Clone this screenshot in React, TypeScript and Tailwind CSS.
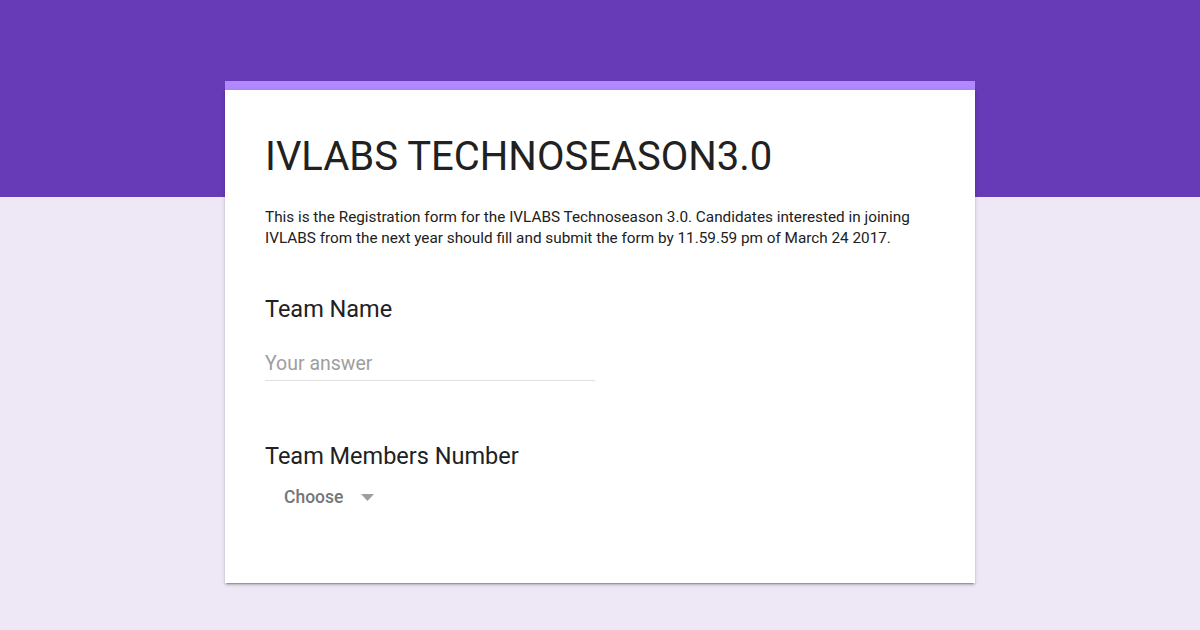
export default function App() {
  return (
    <div
      className="relative h-[630px] w-[1200px] overflow-hidden bg-[#ede7f6]"
      style={{ fontFamily: "Roboto, 'Liberation Sans', sans-serif" }}
    >
      <div className="h-[197px] bg-[#673ab7]" />
      <div className="absolute left-[225px] top-[81px] w-[750px]">
        <div className="h-[9px] bg-[#b388ff]" />
        <div className="h-[493px] bg-white px-10 pt-[44px] shadow-[0_2px_2px_rgba(0,0,0,0.14),0_1px_5px_rgba(0,0,0,0.12),0_3px_1px_-2px_rgba(0,0,0,0.2)]">
          <h1 className="text-[40px] leading-[46px] font-normal text-[#212121]">IVLABS TECHNOSEASON3.0</h1>
          <p className="mt-[27px] text-[15.3px] leading-[21px] text-[#212121]">
            This is the Registration form for the IVLABS Technoseason 3.0. Candidates interested in joining
            <br />
            IVLABS from the next year should fill and submit the form by 11.59.59 pm of March 24 2017.
          </p>
          <div className="mt-[46px] text-[23.5px] leading-[28px] text-[#212121]">Team Name</div>
          <div className="mt-[28px] w-[330px] border-b border-[#e0e0e0] pb-[3px] text-[19.5px] leading-[26px] text-[#9e9e9e]">
            Your answer
          </div>
          <div className="mt-[61px] text-[23.5px] leading-[28px] text-[#212121]">Team Members Number</div>
          <div className="mt-[14px] flex items-center gap-[18px] pl-[19px] text-[17.5px] font-medium leading-[26px] text-[#757575]">
            <span>Choose</span>
            <svg width="13" height="7" viewBox="0 0 13 7">
              <path d="M0 0h13L6.5 7z" fill="#9e9e9e" />
            </svg>
          </div>
        </div>
      </div>
    </div>
  );
}
